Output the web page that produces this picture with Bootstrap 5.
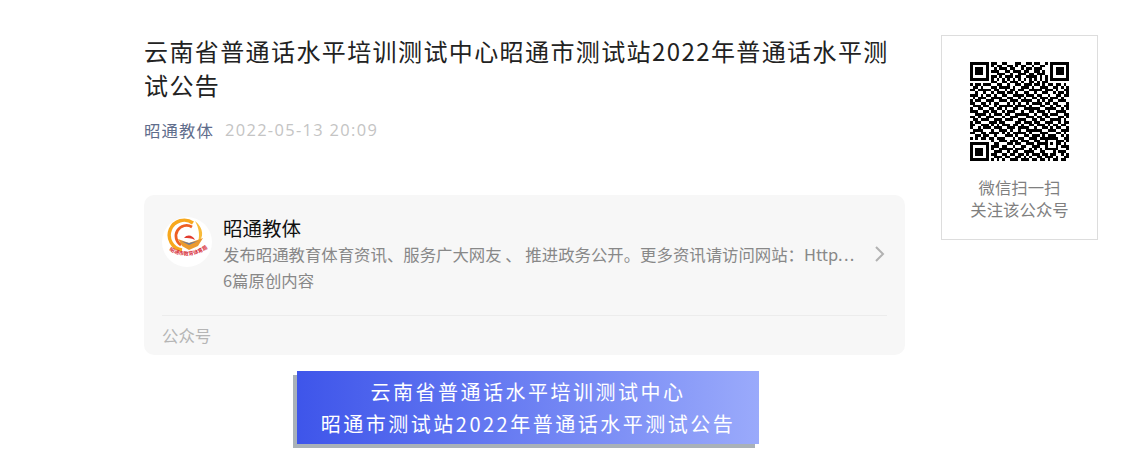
<!DOCTYPE html>
<html lang="zh-CN">
<head>
  <meta charset="UTF-8">
  <title>云南省普通话水平培训测试中心昭通市测试站2022年普通话水平测试公告</title>
  <link href="https://cdn.jsdelivr.net/npm/bootstrap@5.3.3/dist/css/bootstrap.min.css" rel="stylesheet">
  <style>
    body { font-family: "Noto Sans CJK SC", sans-serif; background: #fff; overflow: hidden; height: 463px; }
    .pagina { padding-left: 144px; padding-top: 35px; gap: 36px; }
    .columna { width: 761px; }
    .titulo { font-size: 24px; line-height: 34px; letter-spacing: 1.4px; color: #222; margin: -1px 0 0; font-weight: 400; }
    .meta-fila { font-size: 16.4px; line-height: 24px; margin-top: 16px; gap: 11px; }
    .autor { color: #5f6d8c; letter-spacing: 1.1px; }
    .fecha { color: #c4c4c4; letter-spacing: 1.35px; font-family: "Open Sans", sans-serif; }
    .tarjeta { background: #f7f7f7; border-radius: 10px; height: 160px; margin-top: 53px; padding: 0 18px; }
    .cuerpo { height: 121px; padding-top: 23px; gap: 11px; border-bottom: 1px solid #ececec; }
    .logo { width: 50px; height: 50px; flex: none; margin-top: -1px; }
    .nombre { font-size: 19.5px; line-height: 20px; color: #111; }
    .desc { font-size: 16.4px; line-height: 26px; color: #888; white-space: nowrap; }
    .desc-corta { margin-top: 3px; }
    .puntos { letter-spacing: 1.3px; }
    .flecha { width: 14px; height: 18px; margin-left: auto; margin-top: 27px; flex: none; }
    .tipo { font-size: 16.4px; line-height: 39px; color: #b5b5b5; }
    .banner { width: 462px; height: 73px; margin-top: 16px; margin-left: 153px; padding-top: 5px; background: linear-gradient(90deg, #3e55ea, #9aaafb); box-shadow: -4px 4px 0 #a9b1b8; color: #fff; font-size: 20px; line-height: 32px; letter-spacing: 2.5px; text-align: center; }
    .caja-qr { width: 157px; height: 205px; border: 1px solid #ddd; padding-top: 26px; }
    .qr { width: 99px; height: 99px; display: block; margin: 0 auto; }
    .caja-texto { font-size: 16.4px; line-height: 22px; color: #7f7f7f; margin-top: 15px; text-align: center; }
    .cuerpo-der { width: 640px; }
    .zona-flecha { width: 0; margin-left: -11px; }
  </style>
</head>
<body>
  <div class="pagina d-flex align-items-start">
    <div class="columna">
      <h1 class="titulo">云南省普通话水平培训测试中心昭通市测试站2022年普通话水平测试公告</h1>
      <div class="meta-fila d-flex">
        <span class="autor">昭通教体</span>
        <span class="fecha">2022-05-13 20:09</span>
      </div>
      <div class="tarjeta">
        <div class="cuerpo d-flex align-items-start">
          <svg class="logo" viewBox="0 0 50 50">
            <circle cx="25" cy="25" r="25" fill="#fff"/>
            <path d="M31 6 A15 15 0 1 0 20 33" fill="none" stroke="#f7a81e" stroke-width="3.4"/>
            <path d="M30 10 A10.5 10.5 0 1 0 19 28" fill="none" stroke="#ee5f24" stroke-width="2.8"/>
            <path d="M33 4 C42 11 42 21 36 25 C38 18 37 11 33 4Z" fill="#f8bb3a"/>
            <path d="M16 22 L27 26 L41 21 L36 29 L27 33 L20 29Z" fill="#eb9a2f"/>
            <path d="M19 24 L27 28 L36 24 L27 26Z" fill="#6b7a99"/>
            <path d="M22 21 C25 17 31 18 33 23 C29 21 26 21 22 21Z" fill="#e23b2e"/>
            <path id="arco" d="M7 33 Q26 45 46 31" fill="none"/>
            <text font-size="5.2" font-weight="700" fill="#d8343f"><textPath href="#arco" startOffset="0">昭通市教育体育局</textPath></text>
          </svg>
          <div class="cuerpo-der">
            <div class="nombre">昭通教体</div>
            <div class="desc desc-corta">发布昭通教育体育资讯、服务广大网友 、 推进政务公开。更多资讯请访问网站：Http<span class="puntos">...</span></div>
            <div class="desc">6篇原创内容</div>
          </div>
          <svg class="flecha" viewBox="0 0 14 18"><path d="M3 2 L10 9 L3 16" fill="none" stroke="#b2b2b2" stroke-width="2"/></svg>
          <div class="zona-flecha"></div>
        </div>
        <div class="tipo">公众号</div>
      </div>
      <div class="banner">云南省普通话水平培训测试中心<br>昭通市测试站2022年普通话水平测试公告</div>
    </div>
    <div class="caja-qr">
      <svg class="qr" id="qr" viewBox="0 0 37 37" shape-rendering="crispEdges"></svg>
      <div class="caja-texto">微信扫一扫<br>关注该公众号</div>
    </div>
  </div>
  <script src="https://cdn.jsdelivr.net/npm/bootstrap@5.3.3/dist/js/bootstrap.bundle.min.js"></script>
  <script>
    const filas = [
      "1111111011001100011001101100101111111",
      "1000001010110011010110010011001000001",
      "1011101001011101100101101110001011101",
      "1011101011100110111011001101001011101",
      "1011101000111001001110110111001011101",
      "1000001011010111011001111010101000001",
      "1111111010101010101010101010101111111",
      "0000000011001101110100110101100000000",
      "1011011100110010011011101101011011010",
      "0110100011011110100111010011100110101",
      "1101111101100101101100111110111010011",
      "0010010010111011010011001001100101101",
      "1110101101001100111101110110010011011",
      "0101110011110011001010011011101110100",
      "1011001110011101110111100101011001110",
      "1100110101100010101001011110110110001",
      "0111011001011111011110100011001011011",
      "1001100110110100110011111100111100101",
      "1110011011001011100100110111010011110",
      "0011110101110110011111001001101110011",
      "1101001110001001110001110110110001101",
      "0110111001110111001110011011001111010",
      "1011000111011000011011101100111001011",
      "1100111010101110110100110111010110110",
      "1001011101110011101111001001101011001",
      "0111100010011101001001111110011100111",
      "1100110111101010111110100011100011010",
      "0011011001000111010011011101011100101",
      "1010110110111000101100111011111110011",
      "0000000010011101110111001100100011101",
      "1111111001100011011001110111101011010",
      "1000001011101100100110011100100010111",
      "1011101010011111011100101010111110001",
      "1011101001110010110011110011000101110",
      "1011101011001101101101011101101100101",
      "1000001001110110011010100110111010011",
      "1111111010101001110111011011010110110"
    ];
    let trazo = "";
    filas.forEach((fila, y) => {
      [...fila].forEach((celda, x) => {
        if (celda === "1") trazo += `M${x} ${y}h1v1h-1z`;
      });
    });
    document.getElementById("qr").innerHTML = `<path d="${trazo}" fill="#000"/>`;
  </script>
</body>
</html>
